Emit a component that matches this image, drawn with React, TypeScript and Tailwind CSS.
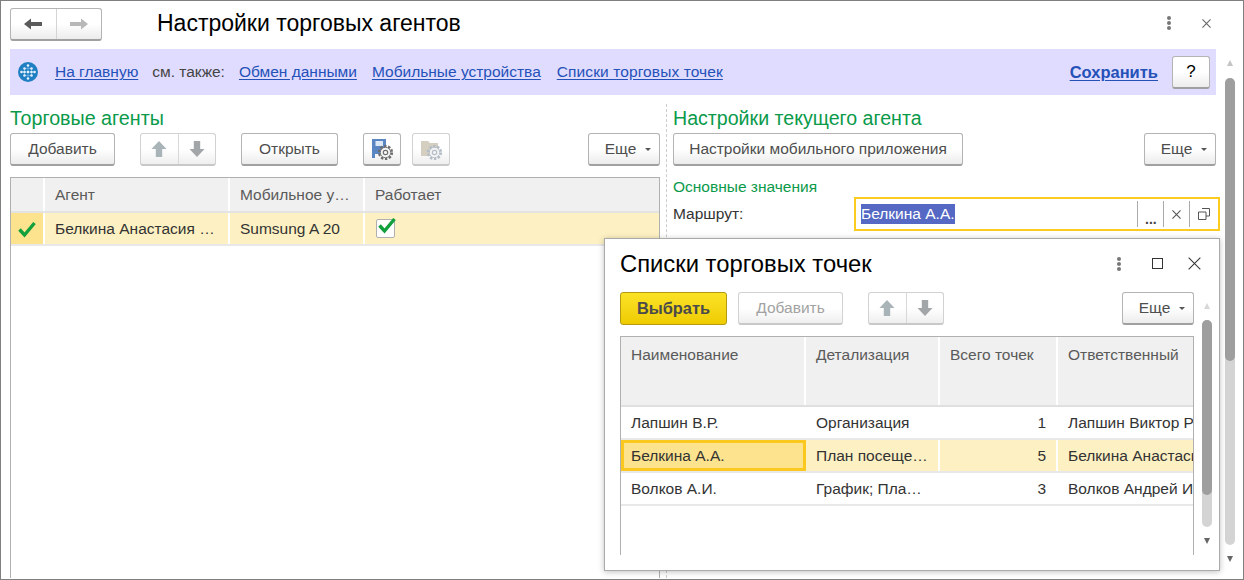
import React from 'react';

const btn = 'flex items-center justify-center h-[33px] rounded-[3px] border border-[#b4b4b4] border-b-2 border-b-[#a0a0a0] bg-gradient-to-b from-white from-50% to-[#ececec] text-[#4e4e4e] text-[15.5px]';
const btnOff = 'flex items-center justify-center h-[33px] rounded-[3px] border border-[#d2d2d2] border-b-2 border-b-[#c8c8c8] bg-gradient-to-b from-white from-50% to-[#efefef] text-[15.5px]';

const Arrow = ({ dir, color }: { dir: 'left' | 'right' | 'up' | 'down'; color: string }) => {
  const rotate = { left: 0, right: 180, up: 90, down: 270 }[dir];
  const nav = dir === 'left' || dir === 'right';
  return (
    <svg width="18" height="18" viewBox="0 0 18 18" style={{ transform: `rotate(${rotate}deg)` }}>
      <path d={nav ? 'M0 9 L7 3.5 V7 H18 V11 H7 V14.5 Z' : 'M1 9 L9 1.5 V5.8 H17 V12.2 H9 V16.5 Z'} fill={color} />
    </svg>
  );
};

const ArrowPair = () => (
  <div className={btnOff + ' w-[76px]'}>
    <div className="flex flex-1 items-center justify-center border-r border-[#d8d8d8] h-full"><Arrow dir="up" color="#a9b4b8" /></div>
    <div className="flex flex-1 items-center justify-center h-full"><Arrow dir="down" color="#a2a6a9" /></div>
  </div>
);

const More = ({ w }: { w: string }) => (
  <div className={btn + ' gap-[9px] pl-2 ' + w}>
    <span>Еще</span>
    <span className="w-0 h-0 border-x-[3px] border-x-transparent border-t-[3px] border-t-[#555] mt-[1px]" />
  </div>
);

const Gear = ({ color, x, y }: { color: string; x: number; y: number }) => (
  <g transform={`translate(${x} ${y})`}>
    <circle r="6.4" fill="none" stroke={color} strokeWidth="2.4" strokeDasharray="2.4 1.6" />
    <circle r="5.2" fill="#f4f4f4" stroke={color} strokeWidth="0.9" />
    <circle r="2.2" fill="none" stroke={color} strokeWidth="1.2" />
  </g>
);

const Logo = () => (
  <svg width="20" height="20" viewBox="0 0 20 20">
    <circle cx="10" cy="10" r="10" fill="#1f7fc2" />
    <path d="M3.5 10 H16.5 M10 3.5 V16.5 M6.5 6.5 V13.5 M13.5 6.5 V13.5 M6.5 6.5 H13.5 M6.5 13.5 H13.5" stroke="#7fbce6" strokeWidth="0.6" />
    {[[3.5, 10], [16.5, 10], [10, 3.5], [10, 16.5], [6.5, 6.5], [13.5, 6.5], [6.5, 13.5], [13.5, 13.5], [10, 10], [6.5, 10], [13.5, 10]].map(([cx, cy]) => (
      <circle key={`${cx}-${cy}`} cx={cx} cy={cy} r="1.3" fill="#e6f3fb" />
    ))}
  </svg>
);

const Link = ({ children, className = '' }: { children: React.ReactNode; className?: string }) => (
  <span className={'text-[#2451b8] underline underline-offset-2 ' + className}>{children}</span>
);

const Kebab = () => (
  <div className="flex flex-col gap-[1px]">
    <span className="w-[4px] h-[4px] rounded-full bg-[#777]" />
    <span className="w-[4px] h-[4px] rounded-full bg-[#777]" />
    <span className="w-[4px] h-[4px] rounded-full bg-[#777]" />
  </div>
);

const Cross = ({ size, color }: { size: number; color: string }) => (
  <svg width={size} height={size} viewBox="0 0 10 10">
    <path d="M0.5 0.5 L9.5 9.5 M9.5 0.5 L0.5 9.5" stroke={color} strokeWidth={size > 12 ? 0.8 : 1.2} fill="none" />
  </svg>
);

const Check = ({ className = '' }: { className?: string }) => (
  <svg width="20" height="18" viewBox="0 0 20 18" className={className}>
    <path d="M2.5 9.5 L7.5 15 L17.5 3" stroke="#12a03c" strokeWidth="3.4" fill="none" />
  </svg>
);

const Scroll = ({ top, thumb, track, arrowGap, small }: { top: number; thumb: number; track: number; arrowGap: number; small?: boolean }) => (
  <div className="flex flex-col items-center w-[10px]">
    <span className={'w-0 h-0 border-x-[3px] border-x-transparent border-b-[6px] ' + (small ? 'border-b-[#d8d8d8]' : 'border-b-[#c4c4c4]')} style={{ marginTop: top }} />
    <div className="w-[10px] rounded-[5px] bg-[#d4d4d4]" style={{ height: track, marginTop: small ? 11 : 12 }}>
      <div className="w-[10px] rounded-[5px] bg-[#9e9e9e]" style={{ height: thumb }} />
    </div>
    <span className="w-0 h-0 border-x-[3px] border-x-transparent border-t-[6px] border-t-[#666]" style={{ marginTop: arrowGap }} />
  </div>
);

const headTop = 'text-[#5a5a5a] bg-[#f0f0f0] px-[10px] pt-[6px] shrink-0';
const headMid = 'flex items-center text-[#5a5a5a] bg-[#f0f0f0] px-[10px] shrink-0';
const cell = 'flex items-center pt-[1px] shrink-0 whitespace-nowrap overflow-hidden';

const rows = [
  { name: 'Лапшин В.Р.', detail: 'Организация', total: 1, owner: 'Лапшин Виктор Р' },
  { name: 'Белкина А.А.', detail: 'План посеще…', total: 5, owner: 'Белкина Анастасия' },
  { name: 'Волков А.И.', detail: 'График; Пла…', total: 3, owner: 'Волков Андрей И' },
];

export default function App() {
  return (
    <div className="relative w-[1244px] h-[580px] overflow-hidden bg-white border border-[#808080] text-[15.5px] text-[#333]" style={{ fontFamily: '"Liberation Sans", Arial, sans-serif' }}>
      {/* шапка */}
      <div className="flex items-start h-[48px] pl-[9px] pr-[32px]">
        <div className={btn + ' w-[92px] h-[31px] mt-[7px]'}>
          <div className="flex flex-1 items-center justify-center border-r border-[#d4d4d4] h-full"><Arrow dir="left" color="#5a5a5a" /></div>
          <div className="flex flex-1 items-center justify-center h-full"><Arrow dir="right" color="#b8b8b8" /></div>
        </div>
        <div className="ml-[55px] mt-[7px] text-[23px] leading-[30px] text-black">Настройки торговых агентов</div>
        <div className="ml-auto flex items-center gap-[31px] mt-[15px]">
          <Kebab />
          <Cross size={9} color="#666" />
        </div>
      </div>

      <div className="flex pl-[9px]">
        <div className="w-[1206px] shrink-0">
          {/* панель ссылок */}
          <div className="flex items-center h-[46px] bg-[#e0dcff] pl-[8px] pr-[6px]">
            <Logo />
            <Link className="ml-[17px]">На главную</Link>
            <span className="ml-[14px] text-[#444]">см. также:</span>
            <Link className="ml-[14px]">Обмен данными</Link>
            <Link className="ml-[15px]">Мобильные устройства</Link>
            <Link className="ml-[16px] tracking-[0.1px]">Списки торговых точек</Link>
            <Link className="ml-auto font-bold text-[16.5px]">Сохранить</Link>
            <div className={btn + ' ml-[14px] w-[38px] text-black text-[17px]'}>?</div>
          </div>

          <div className="flex h-[483px]">
            {/* левая колонка */}
            <div className="w-[650px] shrink-0 flex flex-col">
              <div className="text-[#0a9a4a] text-[19.7px] leading-[24px] mt-[11px]">Торговые агенты</div>
              <div className="flex items-start mt-[3px]">
                <div className={btn + ' w-[105px]'}>Добавить</div>
                <div className="ml-[25px]"><ArrowPair /></div>
                <div className={btn + ' ml-[25px] w-[97px]'}>Открыть</div>
                <div className={btn + ' ml-[25px] w-[38px]'}>
                  <svg width="26" height="26" viewBox="0 0 26 26">
                    <path d="M3 3 H17 V18 H6 V22 H3 Z" fill="#5a86c4" />
                    <rect x="6.5" y="5" width="7.5" height="5" fill="#dce8f6" />
                    <Gear color="#6d6d6d" x={16.5} y={16.5} />
                  </svg>
                </div>
                <div className={btnOff + ' ml-[11px] w-[38px]'}>
                  <svg width="26" height="26" viewBox="0 0 26 26">
                    <path d="M3 5 H10 L12 7 H20 V20 H3 Z" fill="#d4cfc0" />
                    <Gear color="#b4bcc6" x={16.5} y={16.5} />
                  </svg>
                </div>
                <div className="ml-auto"><More w="w-[72px]" /></div>
              </div>
              <div className="mt-[11px] flex-1 border border-[#b0b0b0] border-b-0">
                <div className="flex h-[35px] border-b-2 border-[#e3e3e3]">
                  <div className={headMid + ' w-[34px] border-r-2 border-white'} />
                  <div className={headMid + ' w-[185px] border-r-2 border-white'}>Агент</div>
                  <div className={headMid + ' w-[135px] border-r-2 border-white'}>Мобильное у…</div>
                  <div className={headMid + ' flex-1'}>Работает</div>
                </div>
                <div className="flex h-[33px] border-b-2 border-[#e8e8e8] bg-[#fdf1c3]">
                  <div className="flex items-center justify-center w-[34px] bg-[#fde38e] border-r-2 border-white shrink-0"><Check /></div>
                  <div className={cell + ' w-[185px] px-[10px] border-r-2 border-white'}>Белкина Анастасия …</div>
                  <div className={cell + ' w-[135px] px-[10px] border-r-2 border-white'}>Sumsung A 20</div>
                  <div className="relative flex items-center pl-[11px]">
                    <span className="block w-[19px] h-[19px] rounded-[2px] bg-white border border-[#b0b0b0]" />
                    <Check className="absolute left-[12px] top-[3px]" />
                  </div>
                </div>
              </div>
            </div>
            {/* разделитель */}
            <div className="w-px ml-[6px] mt-[9px] border-l border-dashed border-[#ccc]" />
            {/* правая колонка */}
            <div className="ml-[6px] flex-1 flex flex-col">
              <div className="text-[#0a9a4a] text-[19.6px] leading-[24px] mt-[11px]">Настройки текущего агента</div>
              <div className="flex items-start mt-[3px]">
                <div className={btn + ' w-[290px]'}>Настройки мобильного приложения</div>
                <div className="ml-auto"><More w="w-[72px]" /></div>
              </div>
              <div className="text-[#0a9a4a] leading-[18px] mt-[12px]">Основные значения</div>
              <div className="flex items-center mt-[1px] -mr-1">
                <span>Маршрут:</span>
                <div className="ml-auto flex items-center w-[366px] h-[34px] border-2 border-[#fbcb1f] pl-[5px]">
                  <span className="bg-[#5468c4] text-white leading-[20px]">Белкина А.А.</span>
                  <div className="ml-auto flex h-[26px]">
                    <div className="relative w-[26px] border-l border-[#aaa]"><span className="absolute left-[7px] bottom-[1px] text-[14px] font-bold leading-[14px] text-[#444]">...</span></div>
                    <div className="flex items-center justify-center w-[26px] border-l border-[#aaa]"><Cross size={9} color="#555" /></div>
                    <div className="flex items-center justify-center w-[29px] border-l border-[#aaa]">
                      <svg width="12" height="12" viewBox="0 0 12 12"><path d="M4 .5 H11.5 V8 H8 M.5 4 H8 V11.5 H.5 Z" fill="none" stroke="#555" /></svg>
                    </div>
                  </div>
                </div>
              </div>
            </div>
          </div>
        </div>
        {/* полоса прокрутки */}
        <div className="ml-[9px]"><Scroll top={11} thumb={283} track={467} arrowGap={11} /></div>
      </div>

      {/* всплывающее окно */}
      <div className="absolute left-[603px] top-[237px] w-[616px] h-[333px] bg-white border border-[#aaa] shadow-[0_1px_6px_rgba(0,0,0,0.25)] flex pl-[15px]">
        <div className="w-[574px] shrink-0 flex flex-col">
          <div className="flex items-center h-[53px] pb-[4px] -mr-[7px]">
            <span className="text-[23.8px] text-black">Списки торговых точек</span>
            <div className="ml-auto flex items-center">
              <Kebab />
              <span className="ml-[31px] w-[11px] h-[11px] border border-[#333]" />
              <span className="ml-[25px]"><Cross size={13} color="#333" /></span>
            </div>
          </div>
          <div className="flex items-start">
            <div className="flex items-center justify-center h-[33px] w-[107px] rounded-[3px] border border-[#b39a10] bg-gradient-to-b from-[#fbe224] to-[#efcc00] font-bold text-[16.4px] text-[#4a4a4a]">Выбрать</div>
            <div className={btnOff + ' ml-[11px] w-[105px] text-[#a2a2a2]'}>Добавить</div>
            <div className="ml-[25px]"><ArrowPair /></div>
            <div className="ml-auto"><More w="w-[72px]" /></div>
          </div>
          <div className="mt-[11px] h-[219px] border-x border-t border-[#b0b0b0] overflow-hidden">
            <div className="flex h-[70px] border-b-2 border-[#e0e0e0]">
              <div className={headTop + ' w-[185px] border-r-2 border-white'}>Наименование</div>
              <div className={headTop + ' w-[134px] border-r-2 border-white'}>Детализация</div>
              <div className={headTop + ' w-[118px] border-r-2 border-white'}>Всего точек</div>
              <div className={headTop + ' flex-1'}>Ответственный</div>
            </div>
            {rows.map((r, i) => {
              const active = i === 1;
              return (
                <div key={r.name} className={'flex h-[33px] border-b-2 border-[#e8e8e8] ' + (active ? 'bg-[#fdf1c3]' : '')}>
                  <div className={cell + ' w-[185px] ' + (active ? 'bg-[#fde38e] border-[3px] border-[#fbc81f] px-[7px]' : 'px-[10px] border-r-2 border-white')}>{r.name}</div>
                  <div className={cell + ' w-[134px] px-[10px] border-r-2 border-white'}>{r.detail}</div>
                  <div className={cell + ' w-[118px] px-[10px] border-r-2 border-white justify-end'}>{r.total}</div>
                  <div className={cell + ' flex-1 min-w-0 pl-[10px]'}>{r.owner}</div>
                </div>
              );
            })}
          </div>
        </div>
        <div className="ml-[8px]"><Scroll top={64} thumb={175} track={207} arrowGap={11} small /></div>
      </div>
    </div>
  );
}
